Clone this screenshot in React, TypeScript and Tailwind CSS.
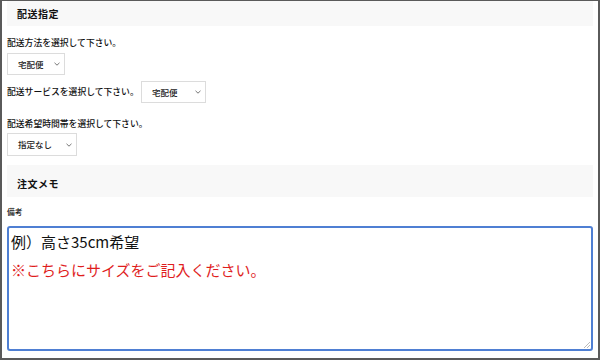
import React from "react";

const font = { fontFamily: '"Noto Sans CJK JP", "Noto Sans", sans-serif' };

function Chevron() {
  return (
    <svg width="6" height="4" viewBox="0 0 6 4" className="shrink-0">
      <path d="M0.5 0.8 L3 3.2 L5.5 0.8" fill="none" stroke="#666" strokeWidth="0.9" />
    </svg>
  );
}

function Select({ label, w, h }: { label: string; w: string; h: string }) {
  return (
    <div
      className={`${w} ${h} border border-[#dcdcdc] bg-white flex items-center justify-between pl-[10px] pr-[4px] text-[8.5px] font-medium text-[#222]`}
    >
      <span>{label}</span>
      <Chevron />
    </div>
  );
}

export default function App() {
  return (
    <div
      className="w-[600px] h-[360px] bg-white border-[#5a5a5a] border-l-2 border-r-2 border-b-2 border-t overflow-hidden text-[#111]"
      style={font}
    >
      <div className="px-[5px] flex flex-col">
        <div className="h-[25px] bg-[#f8f8f8] flex items-center pl-[10px] text-[10px] font-bold tracking-[0.5px]">
          配送指定
        </div>
        <div className="mt-[11px] h-[12px] leading-[12px] text-[8.8px] font-medium">配送方法を選択して下さい。</div>
        <div className="mt-[4px]">
          <Select label="宅配便" w="w-[58px]" h="h-[22px]" />
        </div>
        <div className="mt-[6px] flex items-center">
          <span className="w-[134px] text-[8.8px] font-medium leading-[12px] whitespace-nowrap">配送サービスを選択して下さい。</span>
          <Select label="宅配便" w="w-[65px]" h="h-[22px]" />
        </div>
        <div className="mt-[15px] h-[12px] leading-[12px] text-[8.8px] font-medium">配送希望時間帯を選択して下さい。</div>
        <div className="mt-[3px]">
          <Select label="指定なし" w="w-[70px]" h="h-[23px]" />
        </div>
        <div className="mt-[9px] h-[32px] bg-[#f8f8f8] flex items-center pt-[4px] pl-[10px] text-[10px] font-bold tracking-[0.5px]">
          注文メモ
        </div>
        <div className="mt-[10px] h-[10px] leading-[10px] text-[7.8px] font-medium">備考</div>
        <div className="relative mt-[9px] h-[125px] border-2 border-[#4f7fd3] rounded-[3px] pl-[2px] text-[15px] leading-[28px]">
          <div className="text-[#111]">例）高さ35cm希望</div>
          <div className="text-[#e01e1e]">※こちらにサイズをご記入ください。</div>
          <svg width="6" height="6" viewBox="0 0 6 6" className="absolute right-[1px] bottom-[1px]">
            <path d="M6 0 L0 6 M6 3 L3 6" stroke="#aaa" strokeWidth="0.8" />
          </svg>
        </div>
      </div>
    </div>
  );
}
